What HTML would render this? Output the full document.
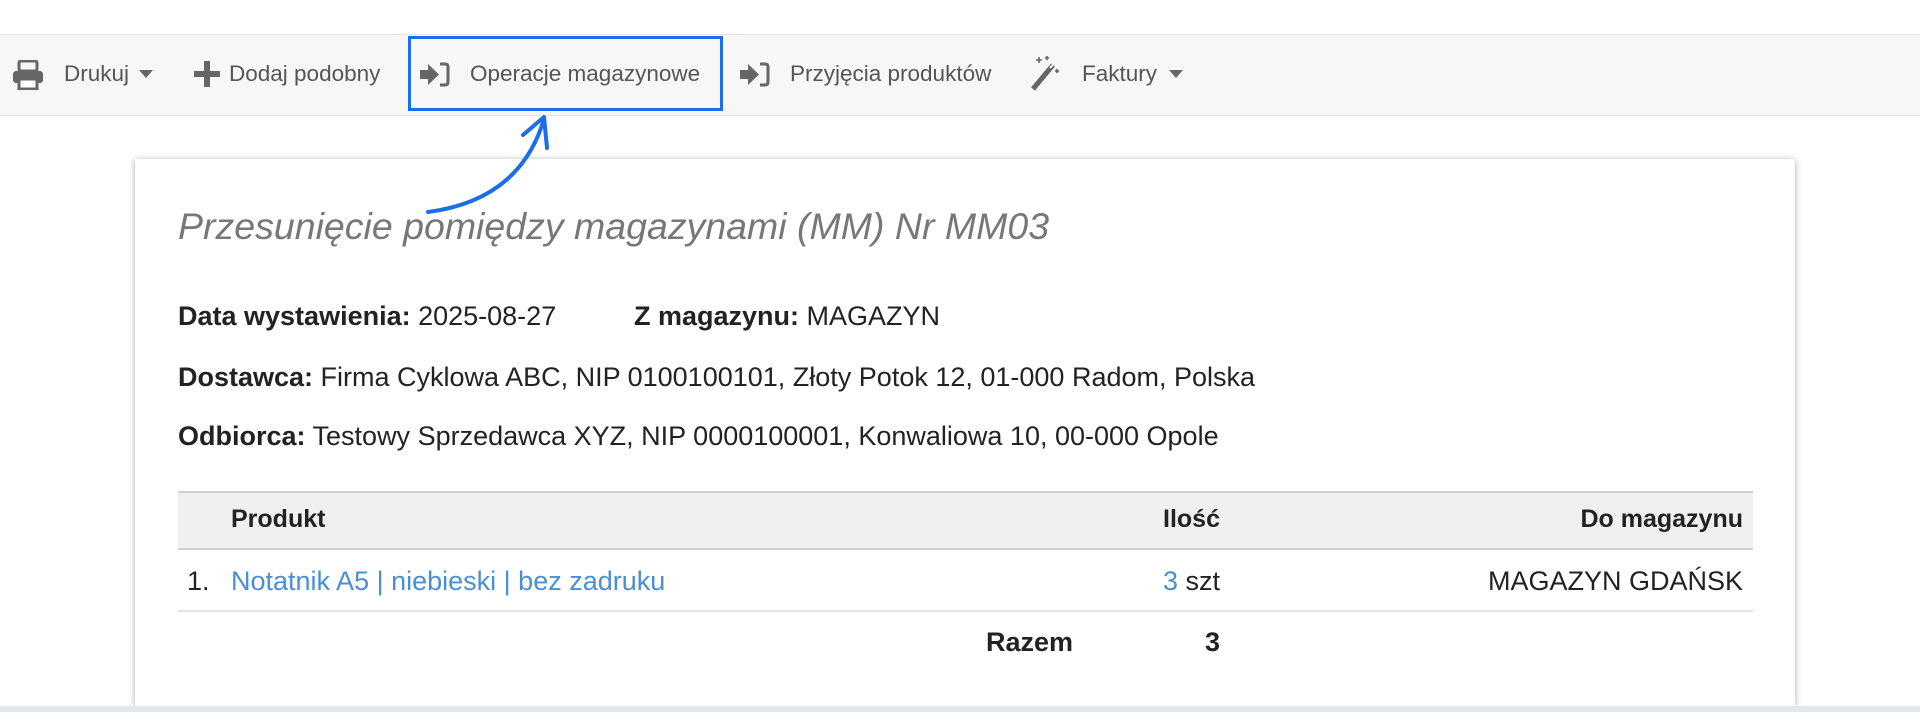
<!DOCTYPE html>
<html><head><meta charset="utf-8"><style>
*{margin:0;padding:0;box-sizing:border-box}
html,body{width:1920px;height:712px;overflow:hidden}
body{background:#fff;font-family:"Liberation Sans",sans-serif;position:relative;color:#222}
.tb{position:absolute;left:0;top:34px;width:1920px;height:82px;background:#f7f7f7;border-top:1px solid #e3e3e3;border-bottom:1px solid #e3e3e3}
.t{position:absolute;top:61px;font-size:22.5px;color:#555;white-space:nowrap}
.ic{position:absolute}
.box{position:absolute;left:408px;top:36px;width:315px;height:75px;border:3px solid #1a6fe8}
.card{position:absolute;left:135px;top:159px;width:1660px;height:547px;background:#fff;box-shadow:0 1px 6px rgba(0,0,0,.35)}
.a{position:absolute;white-space:nowrap;font-size:27px;color:#222}
.a b{font-weight:bold}
.strip{position:absolute;left:0;top:706px;width:1920px;height:6px;background:#e2e7ef}
</style></head><body>
<div class="tb"></div>
<svg class="ic" style="left:12px;top:60px" width="32" height="30" viewBox="0 0 32 30"><rect x="7" y="1" width="18" height="10" rx="2" fill="none" stroke="#666" stroke-width="3"/><rect x="1" y="11" width="30" height="12" rx="3" fill="#666"/><rect x="7" y="19" width="18" height="10" fill="#fff" stroke="#666" stroke-width="3"/></svg>
<div class="t" style="left:64px">Drukuj</div>
<svg class="ic" style="left:139px;top:70px" width="14" height="9"><path d="M0 0H14L7 8Z" fill="#666"/></svg>
<svg class="ic" style="left:194px;top:61px" width="26" height="26"><path d="M10 0h6v10h10v6H16v10h-6V16H0v-6h10z" fill="#666"/></svg>
<div class="t" style="left:229px">Dodaj podobny</div>
<div class="box"></div>
<svg class="ic" style="left:420px;top:62px" width="30" height="25" viewBox="0 0 30 25"><path d="M0 8h8V2l11 10.5L8 23v-6H0z" fill="#666"/><path d="M20 2h5q3 0 3 3v15q0 3-3 3h-5" fill="none" stroke="#666" stroke-width="3"/></svg>
<div class="t" style="left:470px">Operacje magazynowe</div>
<svg class="ic" style="left:740px;top:62px" width="30" height="25" viewBox="0 0 30 25"><path d="M0 8h8V2l11 10.5L8 23v-6H0z" fill="#666"/><path d="M20 2h5q3 0 3 3v15q0 3-3 3h-5" fill="none" stroke="#666" stroke-width="3"/></svg>
<div class="t" style="left:790px">Przyjęcia produktów</div>
<svg class="ic" style="left:1029px;top:55px" width="32" height="36" viewBox="0 0 32 36"><path d="M4 34L24 10" stroke="#666" stroke-width="5"/><path d="M21 13l5-6" stroke="#fff" stroke-width="2"/><path d="M10 2v6M7 5h6M18 1v4M16 3h4M28 14v4M26 16h4" stroke="#666" stroke-width="1.6"/></svg>
<div class="t" style="left:1082px">Faktury</div>
<svg class="ic" style="left:1169px;top:70px" width="14" height="9"><path d="M0 0H14L7 8Z" fill="#666"/></svg>

<div class="card"></div>
<div class="a" style="left:178px;top:205px;font-size:37.5px;font-style:italic;color:#777">Przesunięcie pomiędzy magazynami (MM) Nr MM03</div>
<svg class="ic" style="left:0;top:0" width="700" height="260"><path d="M428 212Q520 200 544 119" fill="none" stroke="#1a6fe8" stroke-width="4" stroke-linecap="round"/><path d="M523 135L544 117L547 148" fill="none" stroke="#1a6fe8" stroke-width="4" stroke-linecap="round" stroke-linejoin="round"/></svg>
<div class="a" style="left:178px;top:301px"><b>Data wystawienia:</b> 2025-08-27</div>
<div class="a" style="left:634px;top:301px"><b>Z magazynu:</b> MAGAZYN</div>
<div class="a" style="left:178px;top:362px"><b>Dostawca:</b> Firma Cyklowa ABC, NIP 0100100101, Złoty Potok 12, 01-000 Radom, Polska</div>
<div class="a" style="left:178px;top:421px"><b>Odbiorca:</b> Testowy Sprzedawca XYZ, NIP 0000100001, Konwaliowa 10, 00-000 Opole</div>

<div style="position:absolute;left:178px;top:491px;width:1575px;height:59px;background:#f0f0f0;border-top:2px solid #cfcfcf;border-bottom:2px solid #cfcfcf"></div>
<div class="a" style="left:231px;top:505px;font-size:25px"><b>Produkt</b></div>
<div class="a" style="left:1100px;width:120px;text-align:right;top:505px;font-size:25px"><b>Ilość</b></div>
<div class="a" style="left:1500px;width:243px;text-align:right;top:505px;font-size:25px"><b>Do magazynu</b></div>
<div class="a" style="left:187px;top:566px">1.</div>
<div class="a" style="left:231px;top:566px;color:#4a8fd4">Notatnik A5 | niebieski | bez zadruku</div>
<div class="a" style="left:1100px;width:120px;text-align:right;top:566px"><span style="color:#4a8fd4">3</span> szt</div>
<div class="a" style="left:1400px;width:343px;text-align:right;top:566px">MAGAZYN GDAŃSK</div>
<div style="position:absolute;left:178px;top:610px;width:1575px;height:2px;background:#e3e3e3"></div>
<div class="a" style="left:900px;width:173px;text-align:right;top:627px"><b>Razem</b></div>
<div class="a" style="left:1100px;width:120px;text-align:right;top:627px"><b>3</b></div>
<div class="strip"></div>
</body></html>
